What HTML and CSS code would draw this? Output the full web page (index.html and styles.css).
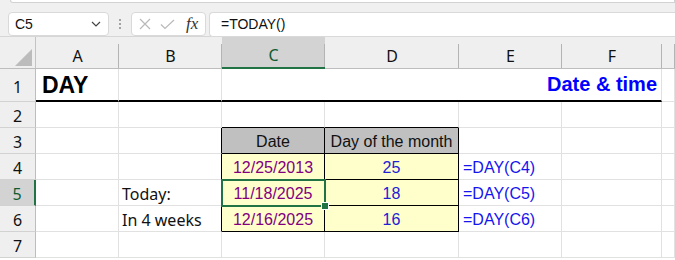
FILE: index.html
```html
<!DOCTYPE html>
<html>
<head>
<meta charset="utf-8">
<link rel="stylesheet" href="styles.css">
</head>
<body>
<div class="app">
  <div class="toolbar">
    <div class="ribbon-edge"></div>
    <div class="fbar">
      <div class="namebox">
        <span class="nb-text">C5</span>
        <svg class="chev" width="10" height="6" viewBox="0 0 10 6"><path d="M1 1 L5 5 L9 1" fill="none" stroke="#444" stroke-width="1.2"/></svg>
      </div>
      <div class="grip"><span></span><span></span><span></span></div>
      <div class="fxbox">
        <svg width="12" height="12" viewBox="0 0 12 12"><path d="M1 1 L11 11 M11 1 L1 11" stroke="#b9b9b9" stroke-width="1.2" fill="none"/></svg>
        <svg width="15" height="11" viewBox="0 0 15 11"><path d="M1 5.5 L5 9.5 L14 1" stroke="#b9b9b9" stroke-width="1.2" fill="none"/></svg>
        <span class="fx">fx</span>
      </div>
      <div class="formula">=TODAY()</div>
    </div>
  </div>

  <div class="sheet">
    <!-- header row -->
    <div class="corner"><svg width="17" height="17" viewBox="0 0 17 17"><path d="M17 0 L17 17 L0 17 Z" fill="#bcbcbc"/></svg></div>
    <div class="ch">A</div>
    <div class="ch">B</div>
    <div class="ch sel">C</div>
    <div class="ch">D</div>
    <div class="ch">E</div>
    <div class="ch">F</div>
    <div class="ch last"></div>

    <!-- row 1 -->
    <div class="rh">1</div>
    <div class="c r1 title">DAY</div>
    <div class="c r1"></div>
    <div class="c r1 span4 subtitle">Date &amp; time</div>
    <div class="c"></div>

    <!-- row 2 -->
    <div class="rh">2</div>
    <div class="c"></div>
    <div class="c"></div>
    <div class="c bb"></div>
    <div class="c bb"></div>
    <div class="c"></div>
    <div class="c"></div>
    <div class="c"></div>

    <!-- row 3 -->
    <div class="rh">3</div>
    <div class="c"></div>
    <div class="c br"></div>
    <div class="c tbl th">Date</div>
    <div class="c tbl th">Day of the month</div>
    <div class="c"></div>
    <div class="c"></div>
    <div class="c"></div>

    <!-- row 4 -->
    <div class="rh">4</div>
    <div class="c"></div>
    <div class="c br"></div>
    <div class="c tbl td date">12/25/2013</div>
    <div class="c tbl td num">25</div>
    <div class="c fml">=DAY(C4)</div>
    <div class="c"></div>
    <div class="c"></div>

    <!-- row 5 -->
    <div class="rh rsel">5</div>
    <div class="c"></div>
    <div class="c br lbl">Today:</div>
    <div class="c tbl td date active">11/18/2025<div class="selbox"><span class="handle"></span></div></div>
    <div class="c tbl td num">18</div>
    <div class="c fml">=DAY(C5)</div>
    <div class="c"></div>
    <div class="c"></div>

    <!-- row 6 -->
    <div class="rh">6</div>
    <div class="c"></div>
    <div class="c br lbl">In 4 weeks</div>
    <div class="c tbl td date">12/16/2025</div>
    <div class="c tbl td num">16</div>
    <div class="c fml">=DAY(C6)</div>
    <div class="c"></div>
    <div class="c"></div>

    <!-- row 7 -->
    <div class="rh">7</div>
    <div class="c"></div>
    <div class="c"></div>
    <div class="c"></div>
    <div class="c"></div>
    <div class="c"></div>
    <div class="c"></div>
    <div class="c"></div>
  </div>
</div>
</body>
</html>
```

FILE: styles.css
```css
* { box-sizing: border-box; }
html, body { margin: 0; padding: 0; }
body {
  width: 675px;
  height: 260px;
  overflow: hidden;
  background: #fff;
  font-family: "Liberation Sans", Arial, sans-serif;
}
.app { width: 675px; }

/* ---------- toolbar ---------- */
.toolbar {
  height: 37px;
  background: #f0f0f0;
  border-bottom: 1px solid #d6d6d6;
  position: relative;
}
.ribbon-edge {
  margin-left: 10px;
  height: 3px;
  background: #fff;
  border: 1px solid #d2d2d2;
  border-top: none;
  border-bottom-left-radius: 4px;
}
.fbar {
  display: flex;
  align-items: center;
  padding-left: 8px;
  margin-top: 9px;
  height: 24px;
}
.namebox {
  width: 101px;
  height: 24px;
  background: #fff;
  border: 1px solid #d9d9d9;
  border-radius: 4px;
  display: flex;
  align-items: center;
  justify-content: space-between;
  padding: 0 7px 0 6px;
}
.nb-text {
  font-family: "Liberation Sans", Arial, sans-serif;
  font-size: 14px;
  color: #111;
}
.grip {
  width: 22px;
  display: flex;
  flex-direction: column;
  align-items: center;
  gap: 2px;
}
.grip span {
  width: 2px;
  height: 2px;
  background: #8a8a8a;
  border-radius: 1px;
}
.fxbox {
  width: 75px;
  height: 24px;
  background: #fff;
  border: 1px solid #d9d9d9;
  border-radius: 4px;
  display: flex;
  align-items: center;
  padding-left: 7px;
  gap: 9px;
}
.fx {
  font-family: "Liberation Serif", "Times New Roman", serif;
  font-style: italic;
  font-size: 17px;
  color: #333;
  margin-left: 2px;
}
.formula {
  margin-left: 3px;
  flex: 1;
  height: 25px;
  background: #fff;
  border: 1px solid #d9d9d9;
  border-right: none;
  border-radius: 4px 0 0 4px;
  font-size: 14px;
  color: #111;
  display: flex;
  align-items: center;
  padding-left: 11px;
}

/* ---------- sheet ---------- */
.sheet {
  display: grid;
  grid-template-columns: 36px 83px 103px 103px 134px 103px 100px 1fr;
  grid-template-rows: 32px 33px repeat(6, 26px);
  font-size: 16px;
}
.corner {
  background: #efefef;
  border-right: 1px solid #c3c3c3;
  border-bottom: 1px solid #bdbdbd;
  display: flex;
  align-items: flex-end;
  justify-content: flex-end;
  padding: 0 3px 2px 0;
}
.ch {
  position: relative;
  background: #efefef;
  border-bottom: 1px solid #bdbdbd;
  display: flex;
  align-items: center;
  justify-content: center;
  padding-top: 6px;
  font-family: "Noto Sans", "Liberation Sans", sans-serif;
  font-size: 16px;
  color: #111;
}
.ch::after {
  content: "";
  position: absolute;
  right: 0;
  top: 7px;
  bottom: 0;
  width: 1px;
  background: #b4b4b4;
}
.ch.sel {
  background: #d3d3d3;
  border-bottom: 2px solid #217346;
  color: #0f5b30;
}
.rh {
  background: #efefef;
  border-right: 1px solid #bdbdbd;
  border-bottom: 1px solid #d2d2d2;
  display: flex;
  align-items: center;
  justify-content: center;
  padding-top: 3px;
  font-family: "Noto Sans", "Liberation Sans", sans-serif;
  font-size: 16px;
  color: #111;
}
.rh.rsel {
  background: #d3d3d3;
  border-right: 2px solid #217346;
  color: #0f5b30;
}
.c {
  border-right: 1px solid #e1e1e1;
  border-bottom: 1px solid #e1e1e1;
  display: flex;
  align-items: center;
  padding: 2px 3px 0 3px;
  white-space: nowrap;
  position: relative;
}
.r1 { border-bottom: 2px solid #000; }
.span4 { grid-column: span 4; }
.title {
  font-weight: bold;
  font-size: 23px;
  color: #000;
  padding-left: 6px;
  padding-top: 1px;
}
.subtitle {
  justify-content: flex-end;
  font-weight: bold;
  font-size: 20px;
  color: #0000ff;
  padding-right: 4px;
  padding-top: 0;
}
.bb { border-bottom-color: #000; }
.br { border-right-color: #000; }
.tbl {
  border-right-color: #000;
  border-bottom-color: #000;
  justify-content: center;
}
.th { background: #c0c0c0; color: #111; }
.td { background: #ffffcc; }
.date { color: #800080; }
.num { color: #2121d6; }
.fml { color: #1515ee; padding-left: 4px; }
.lbl {
  font-family: "Noto Sans", "Liberation Sans", sans-serif;
  font-size: 16px;
  color: #111;
  padding-left: 3px;
}
.active { z-index: 5; }
.selbox {
  position: absolute;
  left: -1px;
  top: -1px;
  right: -2px;
  bottom: -2px;
  border: 2px solid #217346;
}
.handle {
  position: absolute;
  right: -4px;
  bottom: -4px;
  width: 6px;
  height: 6px;
  background: #217346;
  outline: 1px solid #fff;
}
```
